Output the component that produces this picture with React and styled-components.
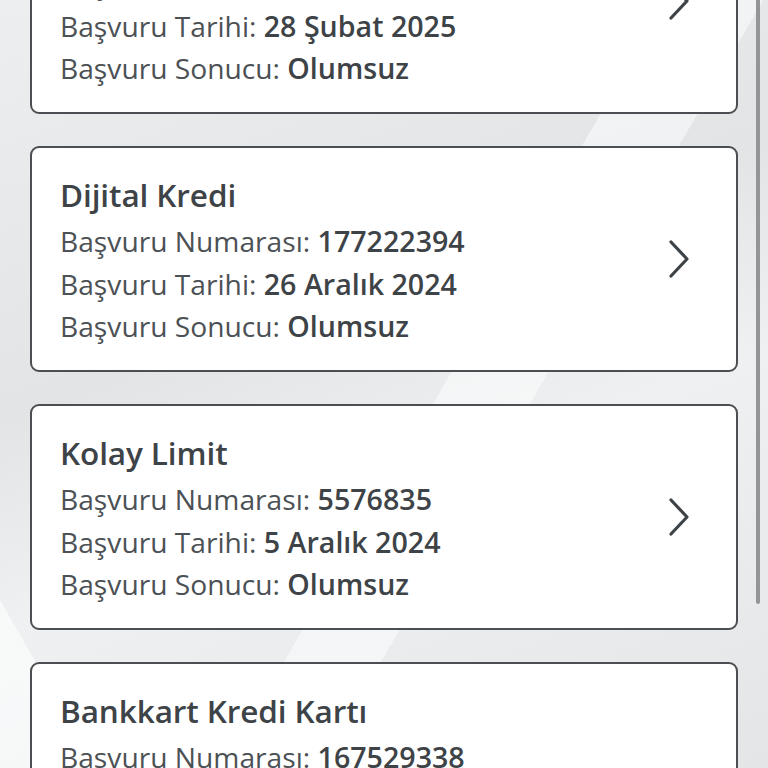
import React from "react";
import styled, { createGlobalStyle } from "styled-components";

const Global = createGlobalStyle`
  html, body { margin: 0; padding: 0; height: 100%; overflow: hidden; }
  body { background: #e4e6e8; }
`;

const Screen = styled.div`
  position: relative;
  width: 768px;
  height: 768px;
  overflow: hidden;
  font-family: "Open Sans", "Noto Sans", sans-serif;
  color: #3e4347;
  background:
    linear-gradient(120deg, transparent 0 55%, rgba(255,255,255,0.5) 55% 63%, transparent 63%),
    linear-gradient(60deg, rgba(255,255,255,0.6) 0 8%, transparent 8%),
    linear-gradient(160deg, #eceef0 0%, #e2e4e6 40%, #eef0f1 60%, #e3e5e7 100%);
`;

const List = styled.div`
  display: flex;
  flex-direction: column;
  gap: 32px;
  padding: 0 30px;
  margin-top: -112px;
`;

const Card = styled.div`
  box-sizing: border-box;
  min-height: ${(p) => (p.$tall ? "290px" : "226px")};
  background: #fff;
  border: 2px solid #4b4f53;
  border-radius: 9px;
  padding: 25px 44px 0 28px;
  display: flex;
  align-items: center;
  justify-content: space-between;
`;

const Info = styled.div`
  display: flex;
  flex-direction: column;
  align-self: flex-start;
`;

const Title = styled.div`
  font-size: 31.5px;
  font-weight: 600;
  line-height: 44px;
  margin-bottom: 3px;
  color: #3e4347;
  letter-spacing: -0.1px;
`;

const Line = styled.div`
  font-size: 28.2px;
  line-height: 42.5px;
  font-weight: 400;
  color: #4c5155;
  white-space: nowrap;
  b { font-weight: 600; color: #3e4347; font-size: 28.6px; }
`;

const Chevron = styled.svg`
  width: 26px;
  height: 42px;
  flex: none;
  margin-top: -25px;
`;

const ScrollBar = styled.div`
  position: absolute;
  right: 8px;
  top: 0;
  width: 4px;
  height: 604px;
  border-radius: 0 0 2px 2px;
  background: #939597;
`;

const items = [
  { title: "Bireysel Kredi", no: "170000000", date: "28 Şubat 2025", result: "Olumsuz" },
  { title: "Dijital Kredi", no: "177222394", date: "26 Aralık 2024", result: "Olumsuz" },
  { title: "Kolay Limit", no: "5576835", date: "5 Aralık 2024", result: "Olumsuz" },
  { title: "Bankkart Kredi Kartı", no: "167529338", date: "1 Aralık 2024", result: "Olumsuz", tall: true },
];

export default function App() {
  return (
    <>
      <Global />
      <Screen>
        <List>
          {items.map((it) => (
            <Card key={it.title} $tall={it.tall}>
              <Info>
                <Title>{it.title}</Title>
                <Line>Başvuru Numarası: <b>{it.no}</b></Line>
                <Line>Başvuru Tarihi: <b>{it.date}</b></Line>
                <Line>Başvuru Sonucu: <b>{it.result}</b></Line>
              </Info>
              <Chevron viewBox="0 0 26 42">
                <path d="M5 4 L21 21 L5 38" fill="none" stroke="#3e4347" strokeWidth="3.2" strokeLinecap="round" strokeLinejoin="round" />
              </Chevron>
            </Card>
          ))}
        </List>
        <ScrollBar />
      </Screen>
    </>
  );
}
